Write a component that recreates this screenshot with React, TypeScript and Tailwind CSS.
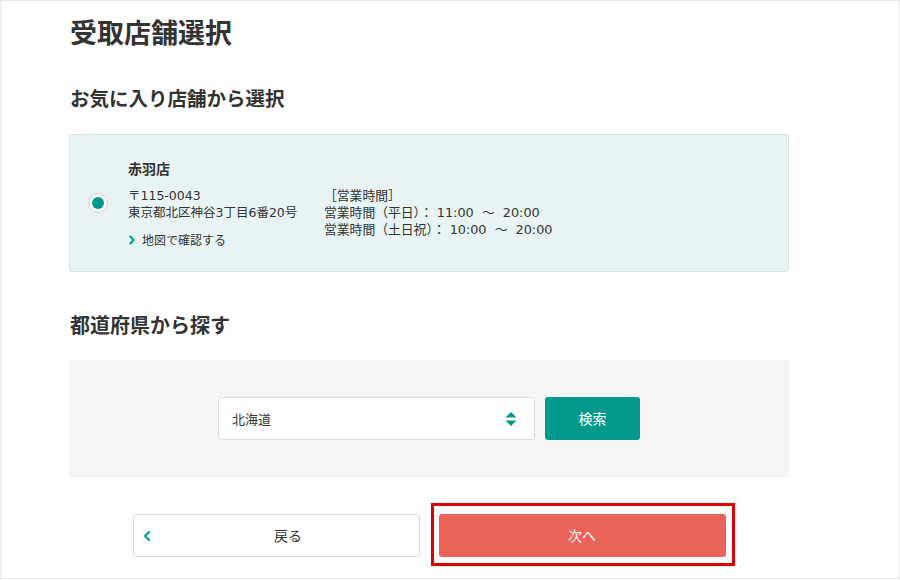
import { ChevronLeft, ChevronRight } from 'lucide-react';

const font = { fontFamily: '"Noto Sans CJK JP", "Noto Sans", sans-serif' };
const infoFont = { fontFamily: '"DejaVu Sans", "Noto Sans CJK JP", sans-serif' };

function SelectArrows() {
  return (
    <svg width="12" height="18" viewBox="0 0 12 18" className="text-[#00998c]">
      <path d="M6 2 L11.5 7.5 H0.5 Z" fill="currentColor" />
      <path d="M6 16 L11.5 10.5 H0.5 Z" fill="currentColor" />
    </svg>
  );
}

export default function App() {
  return (
    <div
      className="w-[900px] h-[579px] bg-white border border-[#e6e6e6] text-[#333] overflow-hidden"
      style={font}
    >
      <div className="ml-[68px] w-[720px] pt-[13px]">
        {/* Page title */}
        <h1 className="text-[27px] leading-[36px] font-bold ml-[1px]">受取店舗選択</h1>

        {/* Favourite store */}
        <h2 className="mt-[33px] text-[19.5px] leading-[30px] font-bold ml-[1px]">お気に入り店舗から選択</h2>
        <div className="mt-[21px] h-[138px] rounded-[3px] border border-[#d6e4e4] bg-[#e8f4f4] flex items-center pl-[18px]">
          <div className="w-[20px] h-[20px] rounded-full bg-white border border-[#cfcfcf] flex items-center justify-center shrink-0">
            <div className="w-[12px] h-[12px] rounded-full bg-[#00998c]" />
          </div>
          <div className="ml-[20px]">
            <div className="text-[14px] leading-[20px] font-bold">赤羽店</div>
            <div className="mt-[9px] flex text-[12.5px] leading-[17px]">
              <div className="w-[196px]" style={infoFont}>
                <div>〒115-0043</div>
                <div>東京都北区神谷3丁目6番20号</div>
                <div className="mt-[10px] flex items-center text-[12px]" style={font}>
                  <ChevronRight className="w-[14px] h-[14px] text-[#00998c] -ml-[3px] mr-[3px]" strokeWidth={3.5} />
                  地図で確認する
                </div>
              </div>
              <div className="whitespace-pre text-[12.8px]" style={infoFont}>
                <div>［営業時間］</div>
                <div>営業時間（平日）： 11:00  ～  20:00</div>
                <div>営業時間（土日祝）： 10:00  ～  20:00</div>
              </div>
            </div>
          </div>
        </div>

        {/* Prefecture search */}
        <h2 className="mt-[38px] text-[20px] leading-[30px] font-bold ml-[1px]">都道府県から探す</h2>
        <div className="mt-[20px] h-[117px] bg-[#f5f5f5] flex items-center justify-center gap-[10px]">
          <div className="w-[317px] h-[43px] bg-white border border-[#dcdcdc] rounded-[3px] flex items-center justify-between pl-[13px] pr-[17px] text-[13px]">
            <span>北海道</span>
            <SelectArrows />
          </div>
          <button className="w-[95px] h-[43px] bg-[#00998c] rounded-[3px] text-white text-[14px]">検索</button>
        </div>

        {/* Actions */}
        <div className="mt-[37px] flex justify-center gap-[19px]">
          <button className="relative w-[287px] h-[43px] bg-white border border-[#d9d9d9] rounded-[3px] flex items-center justify-center pl-[24px] text-[14px]">
            <ChevronLeft className="absolute left-[5px] w-[16px] h-[16px] text-[#00998c]" strokeWidth={3} />
            戻る
          </button>
          <div className="relative">
            <button className="w-[287px] h-[43px] bg-[#eb625a] rounded-[3px] text-white text-[14px]">次へ</button>
            <div className="absolute -left-[8px] -right-[9px] -top-[11px] -bottom-[9px] border-[3px] border-[#e00000] pointer-events-none" />
          </div>
        </div>
      </div>
    </div>
  );
}
